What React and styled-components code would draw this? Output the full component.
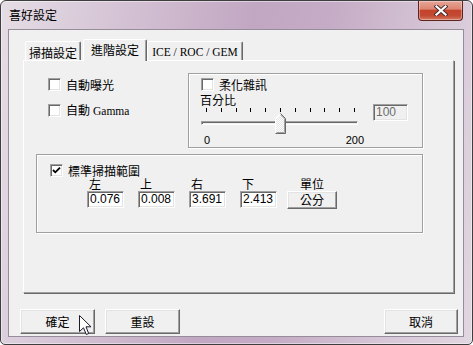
import React from 'react';
import styled, { createGlobalStyle } from 'styled-components';

const Global = createGlobalStyle`
  html, body { margin: 0; padding: 0; background: #fff; }
  body {
    font-family: "Noto Sans CJK TC", "Noto Sans", sans-serif;
    font-size: 12px;
    color: #000;
  }
  * { box-sizing: border-box; }
`;

const Window = styled.div`
  width: 473px;
  height: 345px;
  border: 1px solid #3e3e3e;
  border-radius: 6px 6px 5px 5px;
  background: linear-gradient(100deg, #e5dde5 0%, #d5c4d5 22%, #c2a7c2 48%, #c5abc5 62%, #d8c9d8 85%, #e2d6e2 100%);
  box-shadow: inset 0 0 0 1px rgba(255, 255, 255, 0.45);
  display: flex;
  flex-direction: column;
  overflow: hidden;
`;

const TitleBar = styled.div`
  height: 28px;
  display: flex;
  align-items: flex-start;
`;

const Title = styled.div`
  padding-left: 8px;
  line-height: 28px;
  font-size: 12px;
`;

const CloseButton = styled.div`
  margin-left: auto;
  margin-right: 9px;
  width: 45px;
  height: 20px;
  border: 1px solid #5e231c;
  border-top: none;
  border-radius: 0 0 4px 4px;
  background: linear-gradient(#e7a596 0%, #dc8672 42%, #c4432c 50%, #c34a33 78%, #d47b62 100%);
  box-shadow: inset 0 0 0 1px rgba(255, 255, 255, 0.35);
  display: flex;
  align-items: center;
  justify-content: center;
`;

const Client = styled.div`
  margin: 0 8px 0 7px;
  height: 308px;
  border: 1px solid #978c99;
  background: #f0f0f0;
  padding-top: 9px;
  display: flex;
  flex-direction: column;
`;

const TabStrip = styled.div`
  display: flex;
  align-items: flex-end;
  margin-left: 14px;
`;

const Tab = styled.div`
  position: relative;
  z-index: ${p => (p.$active ? 2 : 1)};
  width: ${p => p.$w}px;
  height: ${p => (p.$active ? 22 : 19)}px;
  margin-left: ${p => p.$ml || 0}px;
  margin-bottom: ${p => (p.$active ? -1 : 0)}px;
  padding: ${p => (p.$active ? '0 0 2px' : '2px 0 0')};
  background: #f0f0f0;
  border-top: 1px solid #fff;
  border-left: 1px solid #fff;
  border-right: 1px solid #696969;
  border-radius: 2px 2px 0 0;
  box-shadow: inset -1px 0 0 #a0a0a0;
  display: flex;
  align-items: center;
  justify-content: center;
  font-family: ${p => (p.$serif ? '"Liberation Serif", serif' : '"Noto Sans CJK TC", sans-serif')};
  font-size: ${p => (p.$serif ? '11.5px' : '12px')};
  white-space: nowrap;
`;

const Panel = styled.div`
  margin-left: 14px;
  width: 431px;
  height: 233px;
  border-top: 1px solid #fff;
  border-left: 1px solid #fff;
  border-right: 1px solid #a0a0a0;
  border-bottom: 1px solid #a0a0a0;
  box-shadow: 1px 1px 0 #696969;
  padding: 12px 0 0 12px;
  display: flex;
  flex-direction: column;
`;

const TopRow = styled.div`
  display: flex;
  height: 75px;
`;

const LeftCol = styled.div`
  width: 152px;
  padding: 5px 0 0 12px;
  display: flex;
  flex-direction: column;
  gap: 13px;
`;

const Group = styled.div`
  width: ${p => p.$w}px;
  height: ${p => p.$h}px;
  margin-top: ${p => p.$mt || 0}px;
  border: 1px solid #a0a0a0;
  box-shadow: 1px 1px 0 #fff, inset 1px 1px 0 #fff;
  padding: ${p => p.$pad};
  display: flex;
  flex-direction: column;
`;

const CheckRow = styled.div`
  display: flex;
  align-items: center;
  gap: 5px;
  height: 13px;
  line-height: 13px;
  margin-left: ${p => p.$ml || 0}px;
  white-space: nowrap;
`;

const Box = styled.div`
  width: 13px;
  height: 13px;
  flex: none;
  border: 1px solid;
  border-color: #a0a0a0 #fff #fff #a0a0a0;
  box-shadow: inset 1px 1px 0 #696969, inset -1px -1px 0 #e3e3e3;
  background: #fff;
  display: flex;
  align-items: center;
  justify-content: center;
`;

const Serif = styled.span`
  font-family: "Liberation Serif", serif;
  font-size: 11.5px;
  margin-left: 3px;
`;

const SmallLabel = styled.div`
  margin-top: 2px;
  line-height: 13px;
  height: 13px;
`;

const SliderRow = styled.div`
  display: flex;
  align-items: flex-start;
`;

const Slider = styled.div`
  width: 165px;
  display: flex;
  flex-direction: column;
`;

const Ticks = styled.div`
  margin: 2px 0 0 6px;
  width: 149px;
  height: 4px;
  display: flex;
  justify-content: space-between;
`;

const Tick = styled.div`
  width: 1px;
  height: 4px;
  background: #000;
`;

const TrackArea = styled.div`
  position: relative;
  height: 20px;
  margin-top: 1px;
  display: flex;
  align-items: center;
`;

const Track = styled.div`
  margin-left: 1px;
  width: 157px;
  height: 4px;
  border: 1px solid;
  border-color: #a0a0a0 #fff #fff #a0a0a0;
  box-shadow: inset 1px 1px 0 #696969;
  background: #f0f0f0;
`;

const Thumb = styled.svg`
  position: absolute;
  left: 75px;
  top: 0;
`;

const ScaleLabels = styled.div`
  display: flex;
  justify-content: space-between;
  padding: 0 1px 0 4px;
  font-family: "Liberation Sans", sans-serif;
  font-size: 11px;
  line-height: 14px;
`;

const Edit = styled.div`
  width: ${p => p.$w || 37}px;
  height: 17px;
  margin: ${p => p.$m || '0'};
  border: 1px solid;
  border-color: #a0a0a0 #fff #fff #a0a0a0;
  box-shadow: inset 1px 1px 0 #696969, inset -1px -1px 0 #e3e3e3;
  background: ${p => (p.$disabled ? '#f0f0f0' : '#fff')};
  color: ${p => (p.$disabled ? '#6d6d6d' : '#000')};
  padding-left: 2px;
  font-family: "Liberation Sans", sans-serif;
  font-size: 12px;
  line-height: 15px;
`;

const FieldsRow = styled.div`
  display: flex;
  gap: 14px;
  margin: 0 0 0 37px;
`;

const FieldCol = styled.div`
  display: flex;
  flex-direction: column;
  align-items: ${p => (p.$center ? 'center' : 'flex-start')};
  width: ${p => p.$w}px;
  margin-left: ${p => p.$ml || 0}px;
`;

const FieldLabel = styled.div`
  height: 13px;
  line-height: 13px;
  padding-left: ${p => (p.$center ? 0 : 2)}px;
`;

const Button = styled.div`
  position: relative;
  width: ${p => p.$w}px;
  height: ${p => p.$h}px;
  margin-top: ${p => p.$mt || 0}px;
  margin-left: ${p => p.$ml || '0'};
  border: 1px solid;
  border-color: #fff #696969 #696969 #fff;
  box-shadow: inset -1px -1px 0 #a0a0a0, inset 1px 1px 0 #e3e3e3;
  background: #f0f0f0;
  display: flex;
  align-items: center;
  justify-content: center;
  line-height: 14px;
`;

const ButtonRow = styled.div`
  display: flex;
  gap: 10px;
  margin-top: 16px;
  padding: 0 5px 0 11px;
`;

const Cursor = styled.svg`
  position: absolute;
  left: 58px;
  top: 5px;
`;

const Check = ({ checked }) => (
  <Box>
    {checked && (
      <svg width="9" height="9" viewBox="0 0 9 9">
        <path d="M1 4 L3.3 6.3 L8 1.6" stroke="#000" strokeWidth="1.8" fill="none" />
      </svg>
    )}
  </Box>
);

export default function App() {
  const ticks = Array.from({ length: 11 });
  return (
    <>
      <Global />
      <Window>
        <TitleBar>
          <Title>喜好設定</Title>
          <CloseButton>
            <svg width="14" height="11" viewBox="0 0 14 11">
              <path d="M2.5 1.5 L11.5 9.5 M11.5 1.5 L2.5 9.5" stroke="#4a2a2a" strokeWidth="4" strokeLinecap="square" />
              <path d="M2.5 1.5 L11.5 9.5 M11.5 1.5 L2.5 9.5" stroke="#fff" strokeWidth="2.2" strokeLinecap="square" />
            </svg>
          </CloseButton>
        </TitleBar>
        <Client>
          <TabStrip>
            <Tab $w={56} $ml={2}>掃描設定</Tab>
            <Tab $w={64} $ml={2} $active>進階設定</Tab>
            <Tab $w={96} $serif>ICE / ROC / GEM</Tab>
          </TabStrip>
          <Panel>
            <TopRow>
              <LeftCol>
                <CheckRow>
                  <Check />
                  <span>自動曝光</span>
                </CheckRow>
                <CheckRow>
                  <Check />
                  <span>自動<Serif>Gamma</Serif></span>
                </CheckRow>
              </LeftCol>
              <Group $w={235} $h={75} $pad="4px 0 0 11px">
                <CheckRow $ml={1}>
                  <Check />
                  <span>柔化雜訊</span>
                </CheckRow>
                <SmallLabel>百分比</SmallLabel>
                <SliderRow>
                  <Slider>
                    <Ticks>
                      {ticks.map((_, i) => <Tick key={i} />)}
                    </Ticks>
                    <TrackArea>
                      <Track />
                      <Thumb width="11" height="21" viewBox="0 0 11 21">
                        <defs>
                          <pattern id="dots" width="2" height="2" patternUnits="userSpaceOnUse">
                            <rect width="2" height="2" fill="#e4e4e4" />
                            <rect width="1" height="1" fill="#fff" />
                            <rect x="1" y="1" width="1" height="1" fill="#fff" />
                          </pattern>
                        </defs>
                        <path d="M0.5 20.5 V5.5 L5.5 0.5 L10.5 5.5 V20.5 Z" fill="url(#dots)" />
                        <path d="M0.5 20 V5.5 L5.5 0.5" stroke="#fff" fill="none" />
                        <path d="M5.5 0.5 L10.5 5.5 V20.5 H0.5" stroke="#696969" fill="none" />
                        <path d="M5.5 1.8 L9.5 5.8 V19.5 H1.5" stroke="#a0a0a0" fill="none" />
                      </Thumb>
                    </TrackArea>
                    <ScaleLabels>
                      <span>0</span>
                      <span>200</span>
                    </ScaleLabels>
                  </Slider>
                  <Edit $w={35} $m="-2px 0 0 8px" $disabled>100</Edit>
                </SliderRow>
              </Group>
            </TopRow>
            <Group $w={387} $h={79} $mt={6} $pad="9px 0 0 13px">
              <CheckRow>
                <Check checked />
                <span>標準掃描範圍</span>
              </CheckRow>
              <FieldsRow>
                <FieldCol $w={37}>
                  <FieldLabel>左</FieldLabel>
                  <Edit $m="1px 0 0">0.076</Edit>
                </FieldCol>
                <FieldCol $w={37}>
                  <FieldLabel>上</FieldLabel>
                  <Edit $m="1px 0 0">0.008</Edit>
                </FieldCol>
                <FieldCol $w={37}>
                  <FieldLabel>右</FieldLabel>
                  <Edit $m="1px 0 0">3.691</Edit>
                </FieldCol>
                <FieldCol $w={37}>
                  <FieldLabel>下</FieldLabel>
                  <Edit $m="1px 0 0">2.413</Edit>
                </FieldCol>
                <FieldCol $w={50} $ml={-4} $center>
                  <FieldLabel $center>單位</FieldLabel>
                  <Button $w={50} $h={18} $mt={1}>公分</Button>
                </FieldCol>
              </FieldsRow>
            </Group>
          </Panel>
          <ButtonRow>
            <Button $w={75} $h={25}>
              確定
              <Cursor width="13" height="21" viewBox="0 0 13 21">
                <path d="M0.5 0.5 V16.5 L4.5 12.8 L7.3 19.5 L9.7 18.5 L7 11.8 L12 11.8 Z" fill="#fff" stroke="#1a1a2a" strokeWidth="1" strokeLinejoin="round" />
              </Cursor>
            </Button>
            <Button $w={75} $h={25}>重設</Button>
            <Button $w={74} $h={25} $ml="auto">取消</Button>
          </ButtonRow>
        </Client>
      </Window>
    </>
  );
}
